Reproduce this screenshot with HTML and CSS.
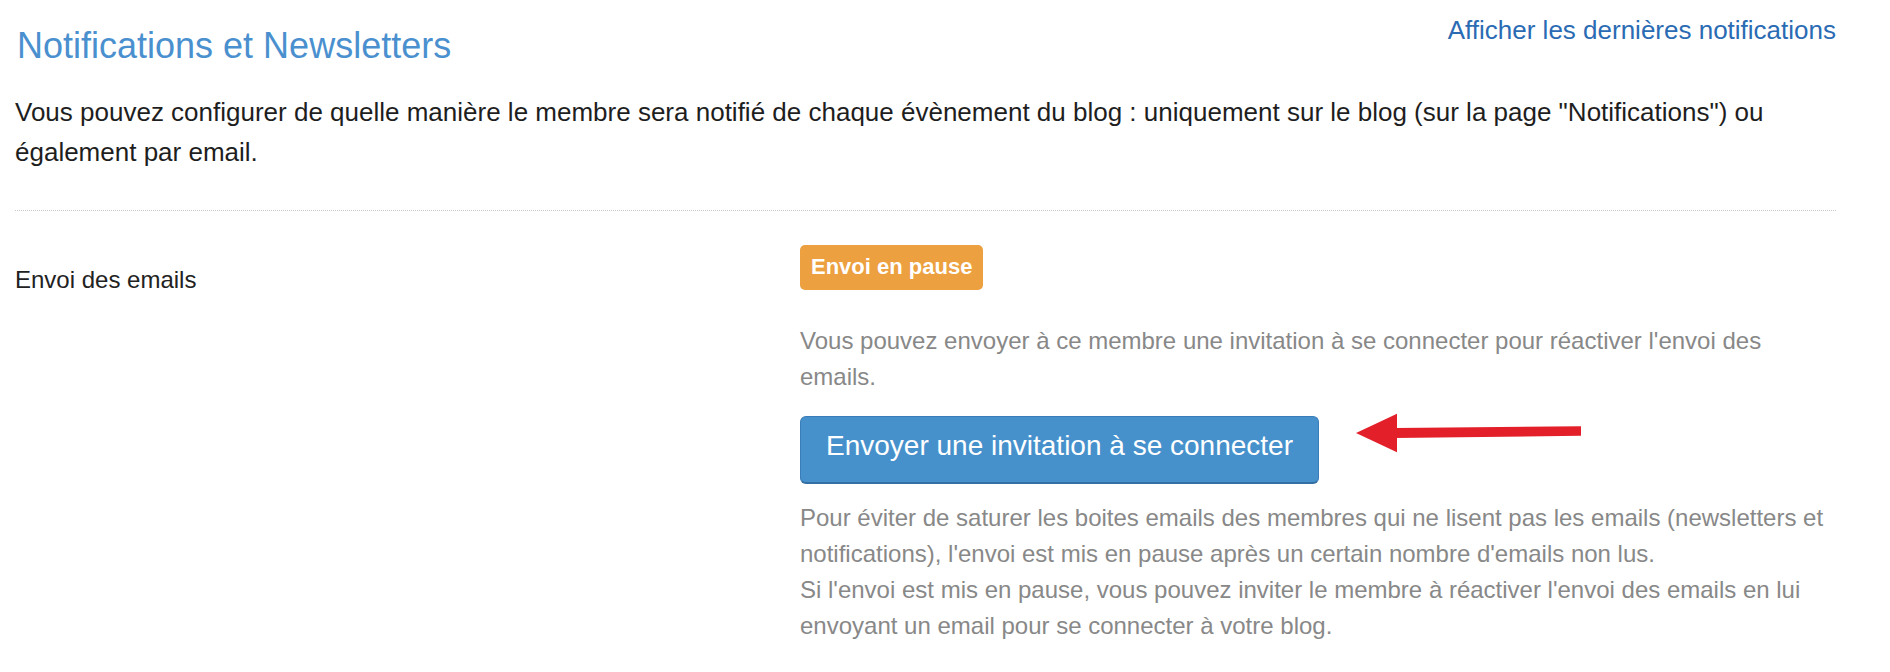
FILE: index.html
```html
<!DOCTYPE html>
<html lang="fr">
<head>
<meta charset="utf-8">
<title>Notifications et Newsletters</title>
<link rel="stylesheet" href="styles.css">
</head>
<body>
<div class="page">
  <header class="head">
    <h1 class="title">Notifications et Newsletters</h1>
    <a class="latest" href="#">Afficher les dernières notifications</a>
  </header>
  <p class="intro">Vous pouvez configurer de quelle manière le membre sera notifié de chaque évènement du blog : uniquement sur le blog (sur la page "Notifications") ou également par email.</p>
  <hr class="sep">
  <div class="row">
    <div class="label">Envoi des emails</div>
    <div class="field">
      <span class="badge">Envoi en pause</span>
      <p class="help first">Vous pouvez envoyer à ce membre une invitation à se connecter pour réactiver l'envoi des emails.</p>
      <div class="action">
        <button class="btn" type="button">Envoyer une invitation à se connecter</button>
        <svg class="arrow" width="240" height="50" viewBox="0 0 240 50" aria-hidden="true">
          <polygon points="45,20 231,18.3 231,27.7 45,30" fill="#e3202a"/>
          <polygon points="6,25 47,5.7 47,44.3" fill="#e3202a"/>
        </svg>
      </div>
      <p class="help last">Pour éviter de saturer les boites emails des membres qui ne lisent pas les emails (newsletters et notifications), l'envoi est mis en pause après un certain nombre d'emails non lus.<br>Si l'envoi est mis en pause, vous pouvez inviter le membre à réactiver l'envoi des emails en lui envoyant un email pour se connecter à votre blog.</p>
    </div>
  </div>
</div>
</body>
</html>
```

FILE: styles.css
```css
* { box-sizing: border-box; }

html, body {
  margin: 0;
  padding: 0;
  background: #ffffff;
}

body {
  font-family: "Liberation Sans", Arial, Helvetica, sans-serif;
  color: #222222;
}

.page {
  padding: 15px 54px 0 15px;
}

.head {
  display: flex;
  justify-content: space-between;
  align-items: flex-start;
}

.title {
  margin: 11px 0 0 2px;
  font-size: 36px;
  line-height: 40px;
  font-weight: normal;
  color: #4a90cf;
}

.latest {
  font-size: 26px;
  line-height: 30px;
  color: #2a6bb4;
  text-decoration: none;
}

.intro {
  margin: 26px 0 0 0;
  font-size: 26px;
  line-height: 40px;
  color: #1e1e1e;
}

.sep {
  margin: 38px 0 0 0;
  border: 0;
  border-top: 1px dotted #c8c8c8;
  height: 0;
}

.row {
  display: grid;
  grid-template-columns: 785px 1fr;
  margin-top: 34px;
}

.label {
  padding: 17px 0 0 0;
  font-size: 24px;
  line-height: 36px;
  color: #222222;
}

.field {
  display: flex;
  flex-direction: column;
  align-items: flex-start;
}

.badge {
  display: inline-block;
  padding: 9px 11px 10px;
  font-size: 22px;
  line-height: 26px;
  font-weight: bold;
  color: #ffffff;
  background: #eca03f;
  border-radius: 5px;
}

.help {
  margin: 0;
  font-size: 24px;
  line-height: 36px;
  color: #888888;
}

.help.first {
  margin-top: 33px;
}

.help.last {
  margin-top: 16px;
}

.action {
  position: relative;
  margin-top: 21px;
}

.btn {
  display: block;
  padding: 9px 25px 16px;
  font-family: "Liberation Sans", Arial, Helvetica, sans-serif;
  font-size: 28px;
  line-height: 40px;
  color: #ffffff;
  background: #4691cc;
  border: 1px solid #3a7db8;
  border-bottom-width: 2px;
  border-bottom-color: #336fa3;
  border-radius: 6px;
  cursor: pointer;
}

.arrow {
  position: absolute;
  left: 550px;
  top: -8px;
}
```
